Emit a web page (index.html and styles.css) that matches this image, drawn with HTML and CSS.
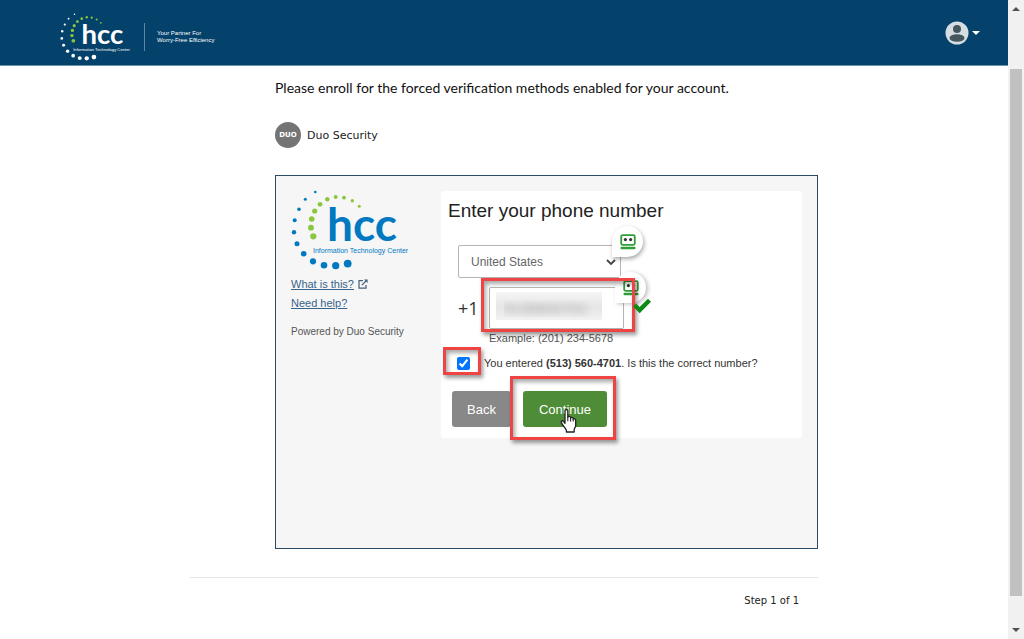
FILE: index.html
```html
<!DOCTYPE html>
<html lang="en">
<head>
    <meta charset="UTF-8">
    <meta name="viewport" content="width=device-width, initial-scale=1.0">
    <title>Enroll - Duo Security</title>
    <link rel="stylesheet" href="styles.css">
</head>
<body>
    <!-- Shared shapes -->
    <svg class="defs" aria-hidden="true">
        <symbol id="hcc-logo" viewBox="0 0 122 80">
            <g class="logo-outer">
                <circle cx="24.3" cy="2" r="1.3"/><circle cx="14.3" cy="9.3" r="1.5"/><circle cx="8" cy="19.3" r="1.8"/>
                <circle cx="3.7" cy="30.3" r="2"/><circle cx="3" cy="42.3" r="2.2"/><circle cx="6" cy="53.7" r="2.5"/>
                <circle cx="12.7" cy="63.7" r="2.8"/><circle cx="22" cy="71.3" r="3.1"/><circle cx="33" cy="75.3" r="3.3"/>
                <circle cx="44.7" cy="75.7" r="3.6"/><circle cx="56.7" cy="73.6" r="3.9"/>
            </g>
            <g fill="#8cc63f">
                <circle cx="68.3" cy="16.3" r="1.5"/><circle cx="61.3" cy="10.7" r="1.7"/><circle cx="53" cy="7.7" r="1.9"/>
                <circle cx="44.7" cy="7" r="2"/><circle cx="36.3" cy="9.3" r="2.2"/><circle cx="29" cy="14.3" r="2.4"/>
                <circle cx="23.7" cy="21" r="2.6"/><circle cx="20.7" cy="29" r="2.8"/><circle cx="20" cy="37.7" r="2.9"/>
                <circle cx="22.3" cy="46.3" r="3.1"/>
            </g>
            <text class="logo-name" x="36" y="51">hcc</text>
            <text class="logo-sub" x="22" y="63">Information Technology Center</text>
        </symbol>
        <symbol id="robot" viewBox="0 0 16 16">
            <rect x="1.2" y="1.2" width="13.6" height="9.6" rx="1.5" fill="#fff" stroke="#2f9e3a" stroke-width="1.8"/>
            <circle cx="5.4" cy="5.6" r="1.6" fill="#333"/>
            <circle cx="10.6" cy="5.6" r="1.6" fill="#333"/>
            <rect x="0.5" y="12.8" width="15" height="2.4" rx="1" fill="#2f9e3a"/>
        </symbol>
    </svg>

    <div class="window">
        <div class="page">
            <header>
                <div class="brand">
                    <svg class="logo logo-small" role="img" aria-label="hcc"><use href="#hcc-logo"/></svg>
                    <div class="tagline">Your Partner For<br>Worry-Free Efficiency</div>
                </div>
                <button class="account" type="button" aria-label="Account">
                    <svg width="24" height="24" viewBox="0 0 24 24">
                        <circle cx="12" cy="12" r="11.5" fill="#d5dde3"/>
                        <circle cx="12" cy="8" r="4" fill="#45565f"/>
                        <ellipse cx="12" cy="17" rx="7.5" ry="3.8" fill="#45565f"/>
                    </svg>
                    <span class="caret"></span>
                </button>
            </header>

            <main>
                <div class="enroll">
                    <p class="intro">Please enroll for the forced verification methods enabled for your account.</p>
                    <div class="method">
                        <span class="duo-icon">DUO</span>
                        <span>Duo Security</span>
                    </div>

                    <section class="duo-frame">
                        <aside>
                            <svg class="logo logo-large" role="img" aria-label="hcc"><use href="#hcc-logo"/></svg>
                            <div class="help-link">
                                <a href="#">What is this?</a>
                                <svg width="10" height="10" viewBox="0 0 10 10" fill="none" stroke="#44617a" stroke-width="1.2">
                                    <path d="M5 1.6H1v7.6h7V6"/>
                                    <path d="M3.8 6.2L8 2"/>
                                    <path d="M6 0.4h3.6V4z" fill="#44617a" stroke="none"/>
                                </svg>
                            </div>
                            <div class="help-link"><a href="#">Need help?</a></div>
                            <p class="powered">Powered by Duo Security</p>
                        </aside>

                        <form class="card">
                            <h1>Enter your phone number</h1>
                            <div class="country">
                                <select aria-label="Country">
                                    <option>United States</option>
                                </select>
                                <svg class="chevron" width="10" height="8" viewBox="0 0 10 8" fill="none" stroke="#444" stroke-width="1.8"><path d="M1 2l4 4 4-4"/></svg>
                                <span class="robo"><svg width="16" height="16"><use href="#robot"/></svg></span>
                            </div>
                            <div class="phone">
                                <label for="phone">+1</label>
                                <div class="phone-field">
                                    <input type="tel" id="phone" value="5135604701">
                                    <span class="robo"><svg width="16" height="16"><use href="#robot"/></svg></span>
                                    <span class="mark mark-phone"></span>
                                </div>
                                <svg class="valid" width="18" height="16" viewBox="0 0 18 16"><path d="M0 8.500L3 5.500l3.600 3.600L15 0.800l3 3L6.700 15.200z" fill="#0c8a14"/></svg>
                            </div>
                            <p class="example">Example: (201) 234-5678</p>
                            <div class="confirm">
                                <span class="tick">
                                    <input type="checkbox" id="confirm" checked>
                                    <span class="mark mark-tick"></span>
                                </span>
                                <label for="confirm">You entered <b>(513) 560-4701</b>. Is this the correct number?</label>
                            </div>
                            <div class="buttons">
                                <button class="back" type="button">Back</button>
                                <div class="continue-wrap">
                                    <button class="continue" type="submit">Continue</button>
                                    <span class="mark mark-continue"></span>
                                    <svg class="pointer" width="18" height="24" viewBox="0 0 18 24">
                                        <path d="M5 1.8c0-1.6 2.8-1.6 2.8 0v6.4c.2-1.2 2.6-1.2 2.8.2v.6c.4-1 2.4-.8 2.6.4v.8c.6-.9 2.5-.6 2.5 1v5.2c0 1.8-1.5 3-1.5 4.2V23H6.4v-1.8C5.2 18.8 3 17 1.4 13.6c-.7-1.6 1-2.4 2-1.2L5 14.2z" fill="#fff" stroke="#222" stroke-width="1.3" stroke-linejoin="round"/>
                                        <path d="M7.8 8v4.2M10.6 9v3.4M13.2 10v2.6" stroke="#222" stroke-width="1.1"/>
                                    </svg>
                                </div>
                            </div>
                        </form>
                    </section>
                </div>
                <div class="steps">Step 1 of 1</div>
            </main>
        </div>

        <div class="scrollbar" aria-hidden="true">
            <span class="arrow-up"></span>
            <span class="thumb"></span>
            <span class="arrow-down"></span>
        </div>
    </div>
</body>
</html>
```

FILE: styles.css
```css
* { box-sizing: border-box; }
body { font-family: "Liberation Sans", Arial, sans-serif; font-size: 12px; margin: 0; background-color: #fff; color: #333; }
p, h1 { margin: 0; }
button, input, select { font-family: inherit; }
.defs { position: absolute; width: 0; height: 0; }
.window { display: flex; height: 100vh; }
.page { flex: 1; overflow: hidden; }

/* Header */
header { display: flex; justify-content: space-between; align-items: center; height: 66px; padding: 0 28px 0 60px; background-color: #04416b; border-bottom: 1px solid #6f93ae; }
.brand { display: flex; align-items: center; gap: 11px; padding-top: 9px; }
.logo { display: block; }
.logo-small { width: 73px; height: 48px; fill: #fff; }
.logo-large { width: 122px; height: 80px; fill: #0079c1; }
.logo-name { font-family: Lato, sans-serif; font-size: 46px; font-weight: bold; }
.logo-sub { font-family: "Liberation Sans", Arial, sans-serif; font-size: 7px; }
.tagline { display: flex; align-items: center; height: 28px; padding-left: 12px; border-left: 1px solid #5d86a3; color: #fff; font-size: 6px; line-height: 7px; }
.account { display: flex; align-items: center; gap: 3px; padding: 0; background: none; border: none; cursor: pointer; }
.caret { border: 4px solid transparent; border-top-color: #fff; border-bottom: none; }

/* Content */
main { width: 628px; max-width: 100%; margin: 0 auto; }
.enroll { padding: 12px 0 28px 85px; border-bottom: 1px solid #e4e4e4; }
.intro { font-family: Lato, sans-serif; font-size: 14px; line-height: 20px; color: #111; }
.method { display: flex; align-items: center; gap: 6px; margin: 24px 0 27px; font-family: "DejaVu Sans", Verdana, sans-serif; font-size: 11px; color: #222; }
.duo-icon { display: flex; align-items: center; justify-content: center; width: 26px; height: 26px; border-radius: 50%; background-color: #747474; color: #fff; font-size: 7px; font-weight: bold; }
.steps { padding: 16px 19px; text-align: right; font-family: "DejaVu Sans", Verdana, sans-serif; font-size: 10px; line-height: 14px; color: #222; }

/* Duo frame */
.duo-frame { display: flex; align-items: flex-start; gap: 28px; min-height: 374px; padding: 15px; background-color: #f6f6f6; border: 1px solid #2b4a63; }
aside { width: 122px; }
.logo-large { margin-top: -1px; }
.help-link { display: flex; align-items: center; gap: 4px; height: 19px; }
.logo-large + .help-link { margin-top: 4px; }
.help-link a { color: #37648a; font-size: 11px; }
.powered { margin-top: 13px; font-size: 10px; line-height: 14px; color: #555; white-space: nowrap; }
.card { flex: 1; min-height: 247px; padding: 8px 7px; background-color: #fff; border-radius: 3px; }
h1 { font-size: 19px; line-height: 24px; font-weight: normal; color: #222; }

.country { position: relative; width: 163px; margin: 22px 0 0 10px; }
.country select { display: block; width: 100%; height: 33px; padding: 0 12px; appearance: none; background-color: #fff; border: 1px solid #b5b5b5; border-radius: 2px; color: #666; font-size: 12px; }
.chevron { position: absolute; top: 13px; right: 5px; }
.robo { position: absolute; display: flex; align-items: center; justify-content: center; width: 31px; height: 31px; border-radius: 50% 50% 50% 0; background-color: #fff; box-shadow: 1px 2px 4px rgba(0, 0, 0, 0.35); }
.country .robo { top: -19px; right: -22px; }

.phone { display: flex; align-items: center; gap: 10px; margin: 9px 0 0 10px; }
.phone label { width: 21px; font-family: "Open Sans", sans-serif; font-size: 18px; }
.phone-field { position: relative; width: 135px; }
.phone-field input { display: block; width: 100%; height: 42px; padding: 0 14px; border: 1px solid #b5b5b5; border-radius: 2px; color: transparent; text-shadow: 0 0 8px rgba(0, 0, 0, 0.3); font-size: 15px; background: linear-gradient(#f5f5f5, #e6e6e6 55%, #f2f2f2) 6px 4px / 106px 28px no-repeat #fff; }
.phone-field .robo { top: -15px; right: -22px; box-shadow: 2px 1px 4px rgba(0, 0, 0, 0.25); }
.valid { margin-bottom: 4px; position: relative; margin-left: -1px; }
.example { margin: 2px 0 0 41px; font-size: 11px; line-height: 14px; color: #555; }

.confirm { display: flex; align-items: center; gap: 14px; margin: 11px 0 0 9px; font-size: 11px; line-height: 14px; }
.tick { position: relative; display: flex; }
.tick input { width: 13px; height: 13px; margin: 0; accent-color: #0075ff; }

.buttons { display: flex; gap: 12px; margin: 21px 0 0 4px; }
.buttons button { height: 36px; border: none; border-radius: 3px; color: #fff; font-size: 13px; cursor: pointer; }
.back { width: 59px; padding: 0; background-color: #888; }
.continue-wrap { position: relative; }
.continue { width: 84px; padding: 0; background-color: #4e8c37; }

/* Red highlight boxes and mouse pointer */
.mark { position: absolute; border: 3px solid #ef4444; pointer-events: none; box-shadow: 2px 3px 4px rgba(0, 0, 0, 0.4), inset 2px 3px 4px rgba(0, 0, 0, 0.35); }
.mark-phone { top: -9px; left: -8px; width: 154px; height: 54px; }
.mark-tick { top: -10px; left: -14px; width: 38px; height: 28px; }
.mark-continue { top: -15px; left: -13px; width: 106px; height: 64px; }
.pointer { position: absolute; top: 18px; left: 37px; }

/* Scrollbar */
.scrollbar { display: flex; flex-direction: column; align-items: center; width: 16px; padding: 7px 0; background-color: #f1f1f1; }
.arrow-up { border: 4px solid transparent; border-bottom-color: #505050; border-top: none; }
.thumb { width: 12px; flex: 1; margin: 58px 0 32px; background-color: #c1c1c1; }
.arrow-down { border: 4px solid transparent; border-top-color: #505050; border-bottom: none; }
```
